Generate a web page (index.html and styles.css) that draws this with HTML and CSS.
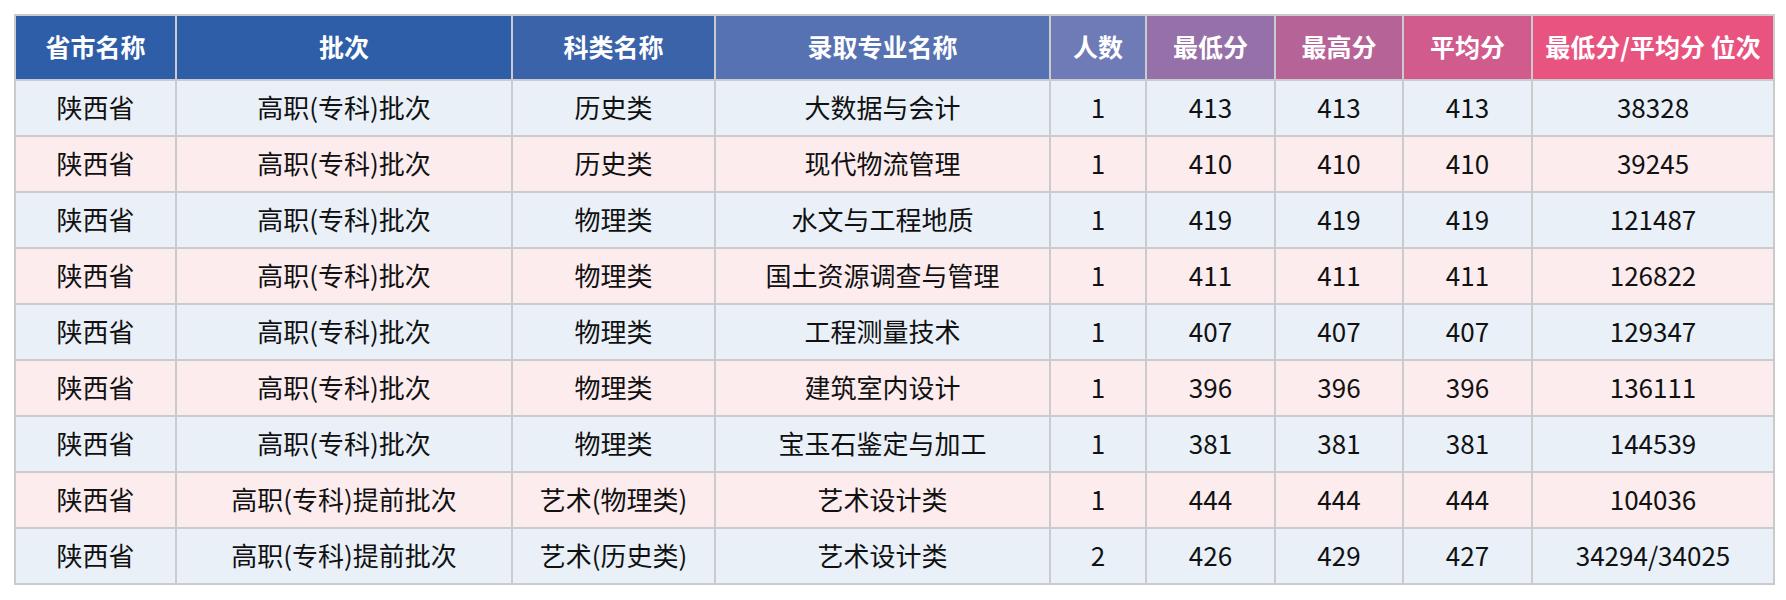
FILE: index.html
```html
<!DOCTYPE html>
<html lang="zh">
<head>
<meta charset="utf-8">
<link rel="stylesheet" href="styles.css">
</head>
<body>
<table class="score-table">
  <colgroup>
    <col class="c1"><col class="c2"><col class="c3"><col class="c4"><col class="c5"><col class="c6"><col class="c7"><col class="c8"><col class="c9">
  </colgroup>
  <thead>
    <tr>
      <th class="h1">省市名称</th>
      <th class="h2">批次</th>
      <th class="h3">科类名称</th>
      <th class="h4">录取专业名称</th>
      <th class="h5">人数</th>
      <th class="h6">最低分</th>
      <th class="h7">最高分</th>
      <th class="h8">平均分</th>
      <th class="h9">最低分/平均分 位次</th>
    </tr>
  </thead>
  <tbody>
    <tr class="odd"><td>陕西省</td><td>高职(专科)批次</td><td>历史类</td><td>大数据与会计</td><td>1</td><td>413</td><td>413</td><td>413</td><td>38328</td></tr>
    <tr class="even"><td>陕西省</td><td>高职(专科)批次</td><td>历史类</td><td>现代物流管理</td><td>1</td><td>410</td><td>410</td><td>410</td><td>39245</td></tr>
    <tr class="odd"><td>陕西省</td><td>高职(专科)批次</td><td>物理类</td><td>水文与工程地质</td><td>1</td><td>419</td><td>419</td><td>419</td><td>121487</td></tr>
    <tr class="even"><td>陕西省</td><td>高职(专科)批次</td><td>物理类</td><td>国土资源调查与管理</td><td>1</td><td>411</td><td>411</td><td>411</td><td>126822</td></tr>
    <tr class="odd"><td>陕西省</td><td>高职(专科)批次</td><td>物理类</td><td>工程测量技术</td><td>1</td><td>407</td><td>407</td><td>407</td><td>129347</td></tr>
    <tr class="even"><td>陕西省</td><td>高职(专科)批次</td><td>物理类</td><td>建筑室内设计</td><td>1</td><td>396</td><td>396</td><td>396</td><td>136111</td></tr>
    <tr class="odd"><td>陕西省</td><td>高职(专科)批次</td><td>物理类</td><td>宝玉石鉴定与加工</td><td>1</td><td>381</td><td>381</td><td>381</td><td>144539</td></tr>
    <tr class="even"><td>陕西省</td><td>高职(专科)提前批次</td><td>艺术(物理类)</td><td>艺术设计类</td><td>1</td><td>444</td><td>444</td><td>444</td><td>104036</td></tr>
    <tr class="odd"><td>陕西省</td><td>高职(专科)提前批次</td><td>艺术(历史类)</td><td>艺术设计类</td><td>2</td><td>426</td><td>429</td><td>427</td><td>34294/34025</td></tr>
  </tbody>
</table>
</body>
</html>
```

FILE: styles.css
```css
html, body {
  margin: 0;
  padding: 0;
  background: #ffffff;
}
body {
  padding: 14px 0 0 14px;
  font-family: "Noto Sans CJK SC", "Noto Sans", sans-serif;
}
.score-table {
  border-collapse: collapse;
  table-layout: fixed;
  width: 1761px;
  border: 2px solid #cbcbcb;
}
.c1 { width: 161px; }
.c2 { width: 336px; }
.c3 { width: 203px; }
.c4 { width: 335px; }
.c5 { width: 96px; }
.c6 { width: 129px; }
.c7 { width: 128px; }
.c8 { width: 129px; }
.c9 { width: 242px; }
.score-table th,
.score-table td {
  border: 2px solid #cbcbcb;
  padding: 0 0 3px 0;
  text-align: center;
  vertical-align: middle;
  white-space: nowrap;
  line-height: 1.2;
}
.score-table th {
  height: 60px;
  color: #ffffff;
  font-size: 25px;
  font-weight: 700;
}
.score-table td {
  height: 51px;
  color: #111111;
  font-size: 26px;
  font-weight: 400;
}
.h1 { background: #2f5ea9; }
.h2 { background: #2f5ea9; }
.h3 { background: #3b63aa; }
.h4 { background: #5672b2; }
.h5 { background: #6e7bb7; }
.h6 { background: #9670a8; }
.h7 { background: #b66398; }
.h8 { background: #d15b8c; }
.h9 { background: #e8547f; }
.odd td { background: #e9f0f8; }
.even td { background: #fcecee; }
```
